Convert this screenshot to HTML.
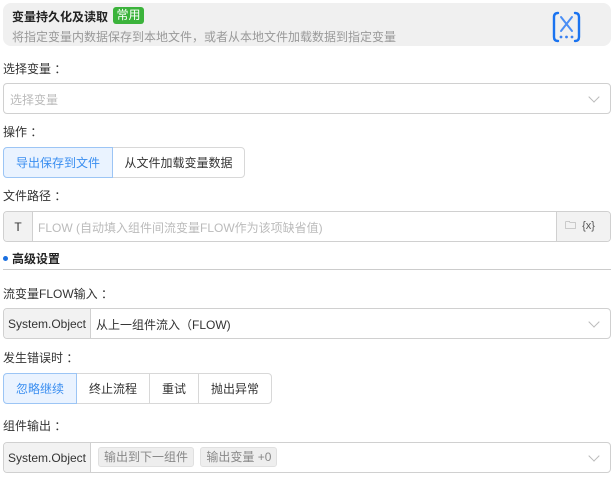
<!DOCTYPE html><html><head><meta charset="utf-8"><style>
*{box-sizing:border-box;margin:0;padding:0}
body{width:614px;height:477px;background:#fff;font-family:"Liberation Sans","Noto Sans CJK SC",sans-serif;font-size:12px;color:#333;position:relative;overflow:hidden}
.abs{position:absolute}
.hdr{left:3px;top:3px;width:608px;height:43px;background:#f0f0f0;border-radius:8px}
.lbl{left:3px;font-size:12px;color:#333}
.box{left:3px;width:608px;height:31px;border:1px solid #d0d0d0;border-radius:4px;background:#fff}
.chev{position:absolute;right:12px;top:9px;width:8px;height:8px;border-right:1px solid #bbb;border-bottom:1px solid #bbb;transform:rotate(45deg)}
.btns{display:flex;height:31px}
.btns div{border:1px solid #d8d8d8;margin-left:-1px;display:flex;align-items:center;justify-content:center;font-size:12px;color:#333;background:#fff}
.btns div:first-child{margin-left:0;border-radius:4px 0 0 4px}
.btns div:last-child{border-radius:0 4px 4px 0}
.btns .on{background:#eaf3ff;border-color:#9cc5f5;color:#3a8ef0;position:relative;z-index:1}
.pre{position:absolute;left:0;top:0;bottom:0;background:#f2f2f2;border-right:1px solid #d0d0d0;display:flex;align-items:center;justify-content:center;color:#333;border-radius:4px 0 0 4px}
.tag{display:inline-block;background:#eee;border:1px solid #e0e0e0;border-radius:3px;color:#888;padding:0 5px;height:20px;line-height:18px;font-size:12px}
</style></head><body>
<div class="abs hdr"></div>
<div class="abs" style="left:12px;top:8px;font-weight:bold;font-size:12px;color:#222">变量持久化及读取</div>
<div class="abs" style="left:113px;top:7px;width:31px;height:17px;background:#3bb33b;border-radius:3px;color:#fff;font-size:12px;text-align:center;line-height:17px">常用</div>
<div class="abs" style="left:12px;top:28px;color:#999;font-size:12px">将指定变量内数据保存到本地文件，或者从本地文件加载数据到指定变量</div>
<svg class="abs" style="left:548px;top:10px" width="38" height="34" viewBox="0 0 38 34"><g fill="none" stroke="#1a73f0" stroke-width="2.4" stroke-linecap="round"><path d="M10 3Q6 3 6 7V27Q6 31 10 31"/><path d="M27 3Q31 3 31 7V27Q31 31 27 31"/><path d="M13 7l11 14M24 7L13 21" stroke="#4a8ef5" stroke-width="2"/></g><g fill="#3a80f0"><circle cx="13" cy="27" r="1.4"/><circle cx="18.5" cy="27" r="1.4"/><circle cx="24" cy="27" r="1.4"/></g></svg>

<div class="abs lbl" style="top:60px">选择变量 ：</div>
<div class="abs box" style="top:83px"><span style="position:absolute;left:6px;top:7px;color:#bbb">选择变量</span><div class="chev"></div></div>

<div class="abs lbl" style="top:123px">操作 ：</div>
<div class="abs btns" style="left:3px;top:147px"><div class="on" style="width:110px">导出保存到文件</div><div style="width:133px">从文件加载变量数据</div></div>

<div class="abs lbl" style="top:187px">文件路径 ：</div>
<div class="abs box" style="top:211px"><div class="pre" style="width:29px">T</div><span style="position:absolute;left:34px;top:7px;color:#bbb">FLOW (自动填入组件间流变量FLOW作为该项缺省值)</span><div style="position:absolute;right:0;top:0;bottom:0;width:54px;background:#f2f2f2;border-left:1px solid #d0d0d0;border-radius:0 4px 4px 0;color:#555;font-size:11px;line-height:29px;padding-left:8px">🗀&nbsp;&nbsp;{x}</div></div>

<div class="abs" style="left:3px;top:256px;width:5px;height:5px;border-radius:50%;background:#1a6fe0"></div>
<div class="abs" style="left:12px;top:250px;font-weight:bold;color:#222">高级设置</div>
<div class="abs" style="left:3px;top:269px;width:608px;height:1px;background:#ccc"></div>

<div class="abs lbl" style="top:285px">流变量FLOW输入 ：</div>
<div class="abs box" style="top:308px"><div class="pre" style="width:87px">System.Object</div><span style="position:absolute;left:92px;top:7px;color:#333">从上一组件流入（FLOW)</span><div class="chev"></div></div>

<div class="abs lbl" style="top:349px">发生错误时 ：</div>
<div class="abs btns" style="left:3px;top:373px"><div class="on" style="width:74px">忽略继续</div><div style="width:74px">终止流程</div><div style="width:50px">重试</div><div style="width:74px">抛出异常</div></div>

<div class="abs lbl" style="top:417px">组件输出 ：</div>
<div class="abs box" style="top:442px"><div class="pre" style="width:87px">System.Object</div><span style="position:absolute;left:94px;top:4px"><span class="tag">输出到下一组件</span> <span class="tag" style="margin-left:3px">输出变量 +0</span></span><div class="chev"></div></div>
</body></html>
